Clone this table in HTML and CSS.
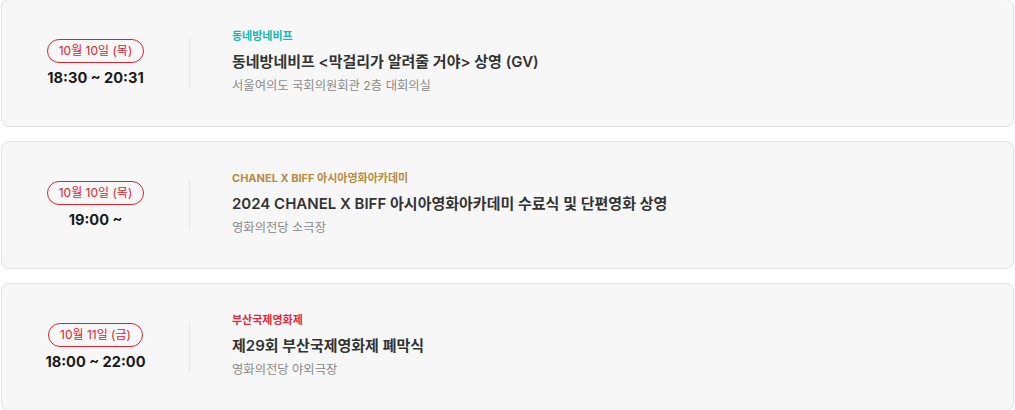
FILE: index.html
```html
<!DOCTYPE html>
<html lang="ko">
<head>
<meta charset="utf-8">
<link rel="stylesheet" href="styles.css">
</head>
<body>
<ul class="event-list">
  <li class="card">
    <div class="when">
      <span class="date">10월 10일 (목)</span>
      <span class="time">18:30 ~ 20:31</span>
    </div>
    <div class="divider"></div>
    <div class="info">
      <span class="category teal">동네방네비프</span>
      <span class="title">동네방네비프 &lt;막걸리가 알려줄 거야&gt; 상영 (GV)</span>
      <span class="place">서울여의도 국회의원회관 2층 대회의실</span>
    </div>
  </li>
  <li class="card">
    <div class="when">
      <span class="date">10월 10일 (목)</span>
      <span class="time">19:00 ~</span>
    </div>
    <div class="divider"></div>
    <div class="info">
      <span class="category gold">CHANEL X BIFF 아시아영화아카데미</span>
      <span class="title">2024 CHANEL X BIFF 아시아영화아카데미 수료식 및 단편영화 상영</span>
      <span class="place">영화의전당 소극장</span>
    </div>
  </li>
  <li class="card">
    <div class="when">
      <span class="date">10월 11일 (금)</span>
      <span class="time">18:00 ~ 22:00</span>
    </div>
    <div class="divider"></div>
    <div class="info">
      <span class="category red">부산국제영화제</span>
      <span class="title">제29회 부산국제영화제 폐막식</span>
      <span class="place">영화의전당 야외극장</span>
    </div>
  </li>
</ul>
</body>
</html>
```

FILE: styles.css
```css
html, body {
  margin: 0;
  padding: 0;
  background: #ffffff;
  font-family: Inter, "Noto Sans CJK KR", "Noto Sans", sans-serif;
}

.event-list {
  list-style: none;
  margin: -1px 0 0 0;
  padding: 0 1px;
  display: flex;
  flex-direction: column;
  gap: 14px;
}

.card {
  box-sizing: border-box;
  height: 128px;
  display: flex;
  align-items: center;
  background: #f7f7f7;
  border: 1px solid #e2e2e2;
  border-radius: 8px;
}

.when {
  width: 187px;
  display: flex;
  flex-direction: column;
  align-items: center;
  gap: 6px;
}

.date {
  box-sizing: border-box;
  height: 24px;
  padding: 0 11px;
  display: flex;
  align-items: center;
  border: 1px solid #d9232e;
  border-radius: 12px;
  color: #d9232e;
  font-size: 12px;
  line-height: 1;
}

.time {
  color: #1a1a1a;
  font-size: 14.6px;
  font-weight: 700;
  line-height: 18px;
}

.divider {
  width: 1px;
  height: 50px;
  background: #e4e4e4;
}

.info {
  padding-left: 42px;
  padding-bottom: 3px;
  display: flex;
  flex-direction: column;
  gap: 6px;
}

.category {
  font-size: 11px;
  font-weight: 700;
  line-height: 14px;
  margin-bottom: 3px;
}

.teal { color: #14b8ad; }
.gold { color: #b98b3f; }
.red { color: #e0293f; }

.title {
  color: #333333;
  font-size: 15px;
  font-weight: 600;
  line-height: 20px;
}

.place {
  color: #8a8a8a;
  font-size: 12.3px;
  line-height: 16px;
}
```
